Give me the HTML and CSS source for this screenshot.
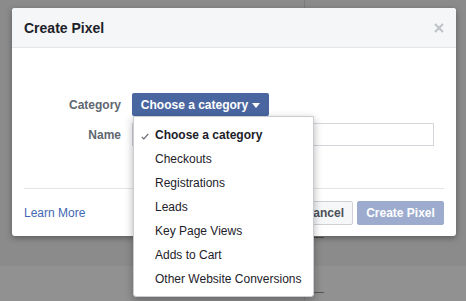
FILE: index.html
```html
<!DOCTYPE html>
<html>
<head>
<meta charset="utf-8">
<link rel="stylesheet" href="styles.css">
</head>
<body>
<div class="page">
  <div class="bg-line bg-vline"></div>
  <div class="bg-band"></div>
  <div class="bg-line bg-vline2"></div>
  <div class="bg-line bg-h1"></div>
  <div class="bg-line bg-h2"></div>

  <div class="dialog">
    <div class="header">
      <span class="title">Create Pixel</span>
      <svg class="close" width="10" height="10" viewBox="0 0 10 10"><path d="M1 1L9 9M9 1L1 9" stroke="#bec2c9" stroke-width="2" fill="none"/></svg>
    </div>
    <div class="body">
      <div class="row">
        <label class="label">Category</label>
        <div class="select-wrap">
          <button class="select">Choose a category <span class="caret"></span></button>
          <ul class="menu">
            <li class="item selected"><svg class="check" width="8" height="7" viewBox="0 0 8 7"><path d="M0.7 3.8L2.8 5.9L7.3 0.8" stroke="#606770" stroke-width="1.2" fill="none"/></svg>Choose a category</li>
            <li class="item">Checkouts</li>
            <li class="item">Registrations</li>
            <li class="item">Leads</li>
            <li class="item">Key Page Views</li>
            <li class="item">Adds to Cart</li>
            <li class="item">Other Website Conversions</li>
          </ul>
        </div>
      </div>
      <div class="row row-name">
        <label class="label">Name</label>
        <div class="input"></div>
      </div>
    </div>
    <div class="footer">
      <a class="learn">Learn More</a>
      <div class="actions">
        <button class="btn btn-cancel">Cancel</button>
        <button class="btn btn-primary">Create Pixel</button>
      </div>
    </div>
  </div>
</div>
</body>
</html>
```
FILE: styles.css
```css
* { box-sizing: border-box; }
html, body {
  margin: 0;
  padding: 0;
}
body {
  width: 466px;
  height: 301px;
  overflow: hidden;
  background: #8b8b8b;
  font-family: "Liberation Sans", Arial, Helvetica, sans-serif;
}
.page {
  position: relative;
  width: 466px;
  height: 301px;
  padding-top: 8px;
  padding-left: 12px;
}
.bg-line { position: absolute; background: #7c7c7c; }
.bg-vline { left: 304px; top: 0; width: 1px; height: 8px; }
.bg-band { position: absolute; left: 0; right: 0; top: 266px; bottom: 0; background: #919191; }
.bg-vline2 { left: 304px; top: 266px; width: 1px; height: 35px; background: #858585; }
.bg-h1 { left: 313px; top: 237px; width: 11px; height: 1px; background: #555; }
.bg-h2 { left: 313px; top: 292px; width: 11px; height: 1px; background: #555; }

.dialog {
  position: relative;
  width: 444px;
  height: 228px;
  background: #fff;
  border-radius: 3px;
  box-shadow: 0 2px 6px rgba(0,0,0,0.35);
  display: flex;
  flex-direction: column;
}
.header {
  height: 40px;
  background: #f5f6f7;
  border-bottom: 1px solid #e5e5e5;
  border-radius: 3px 3px 0 0;
  display: flex;
  align-items: center;
  justify-content: space-between;
  padding: 0 12px;
}
.title {
  font-size: 14px;
  font-weight: bold;
  color: #1d2129;
}
.close {
  display: block;
  margin-top: 1px;
}
.body {
  padding: 45px 12px 0 12px;
  height: 140px;
}
.row {
  display: flex;
  align-items: center;
  height: 23px;
}
.row-name { margin-top: 7px; }
.label {
  width: 97px;
  text-align: right;
  font-size: 12px;
  font-weight: bold;
  color: #606770;
  margin-right: 11px;
}
.select-wrap { position: relative; }
.select {
  display: flex;
  align-items: center;
  justify-content: center;
  white-space: nowrap;
  height: 23px;
  width: 137px;
  padding: 0;
  border: none;
  border-radius: 2px;
  background: #4a66a0;
  color: #fff;
  font-family: inherit;
  font-size: 12px;
  font-weight: bold;
}
.caret {
  display: inline-block;
  margin-left: 4px;
  margin-top: 1px;
  border-left: 4px solid transparent;
  border-right: 4px solid transparent;
  border-top: 5px solid #fff;
}
.menu {
  position: absolute;
  z-index: 5;
  left: 1px;
  top: 23px;
  width: 181px;
  margin: 0;
  padding: 6px 0 5px;
  list-style: none;
  background: #fff;
  border: 1px solid #c9ccd1;
  border-radius: 0 0 3px 3px;
  box-shadow: 0 3px 8px rgba(0,0,0,0.3);
}
.item {
  height: 24px;
  line-height: 24px;
  padding-left: 21px;
  font-size: 12px;
  color: #1d2129;
  position: relative;
  white-space: nowrap;
}
.item.selected { font-weight: bold; }
.check {
  position: absolute;
  left: 7px;
  top: 10px;
}
.input {
  width: 302px;
  height: 23px;
  border: 1px solid #d3d6db;
  background: #fff;
}
.footer {
  margin: 0 12px;
  border-top: 1px solid #e5e5e5;
  height: 48px;
  display: flex;
  align-items: center;
  justify-content: space-between;
  padding-top: 1px;
}
.learn {
  font-size: 12px;
  color: #4267b2;
}
.actions { display: flex; gap: 4px; }
.btn {
  height: 24px;
  font-family: inherit;
  font-size: 12px;
  font-weight: bold;
  border-radius: 2px;
  padding: 0 9px;
  white-space: nowrap;
}
.btn-cancel {
  background: #f6f7f9;
  border: 1px solid #ced0d4;
  color: #4b4f56;
  padding: 0 8px;
}
.btn-primary {
  width: 87px;
  padding: 0;
  background: #9cabce;
  border: 1px solid #9cabce;
  color: #fff;
}
```
